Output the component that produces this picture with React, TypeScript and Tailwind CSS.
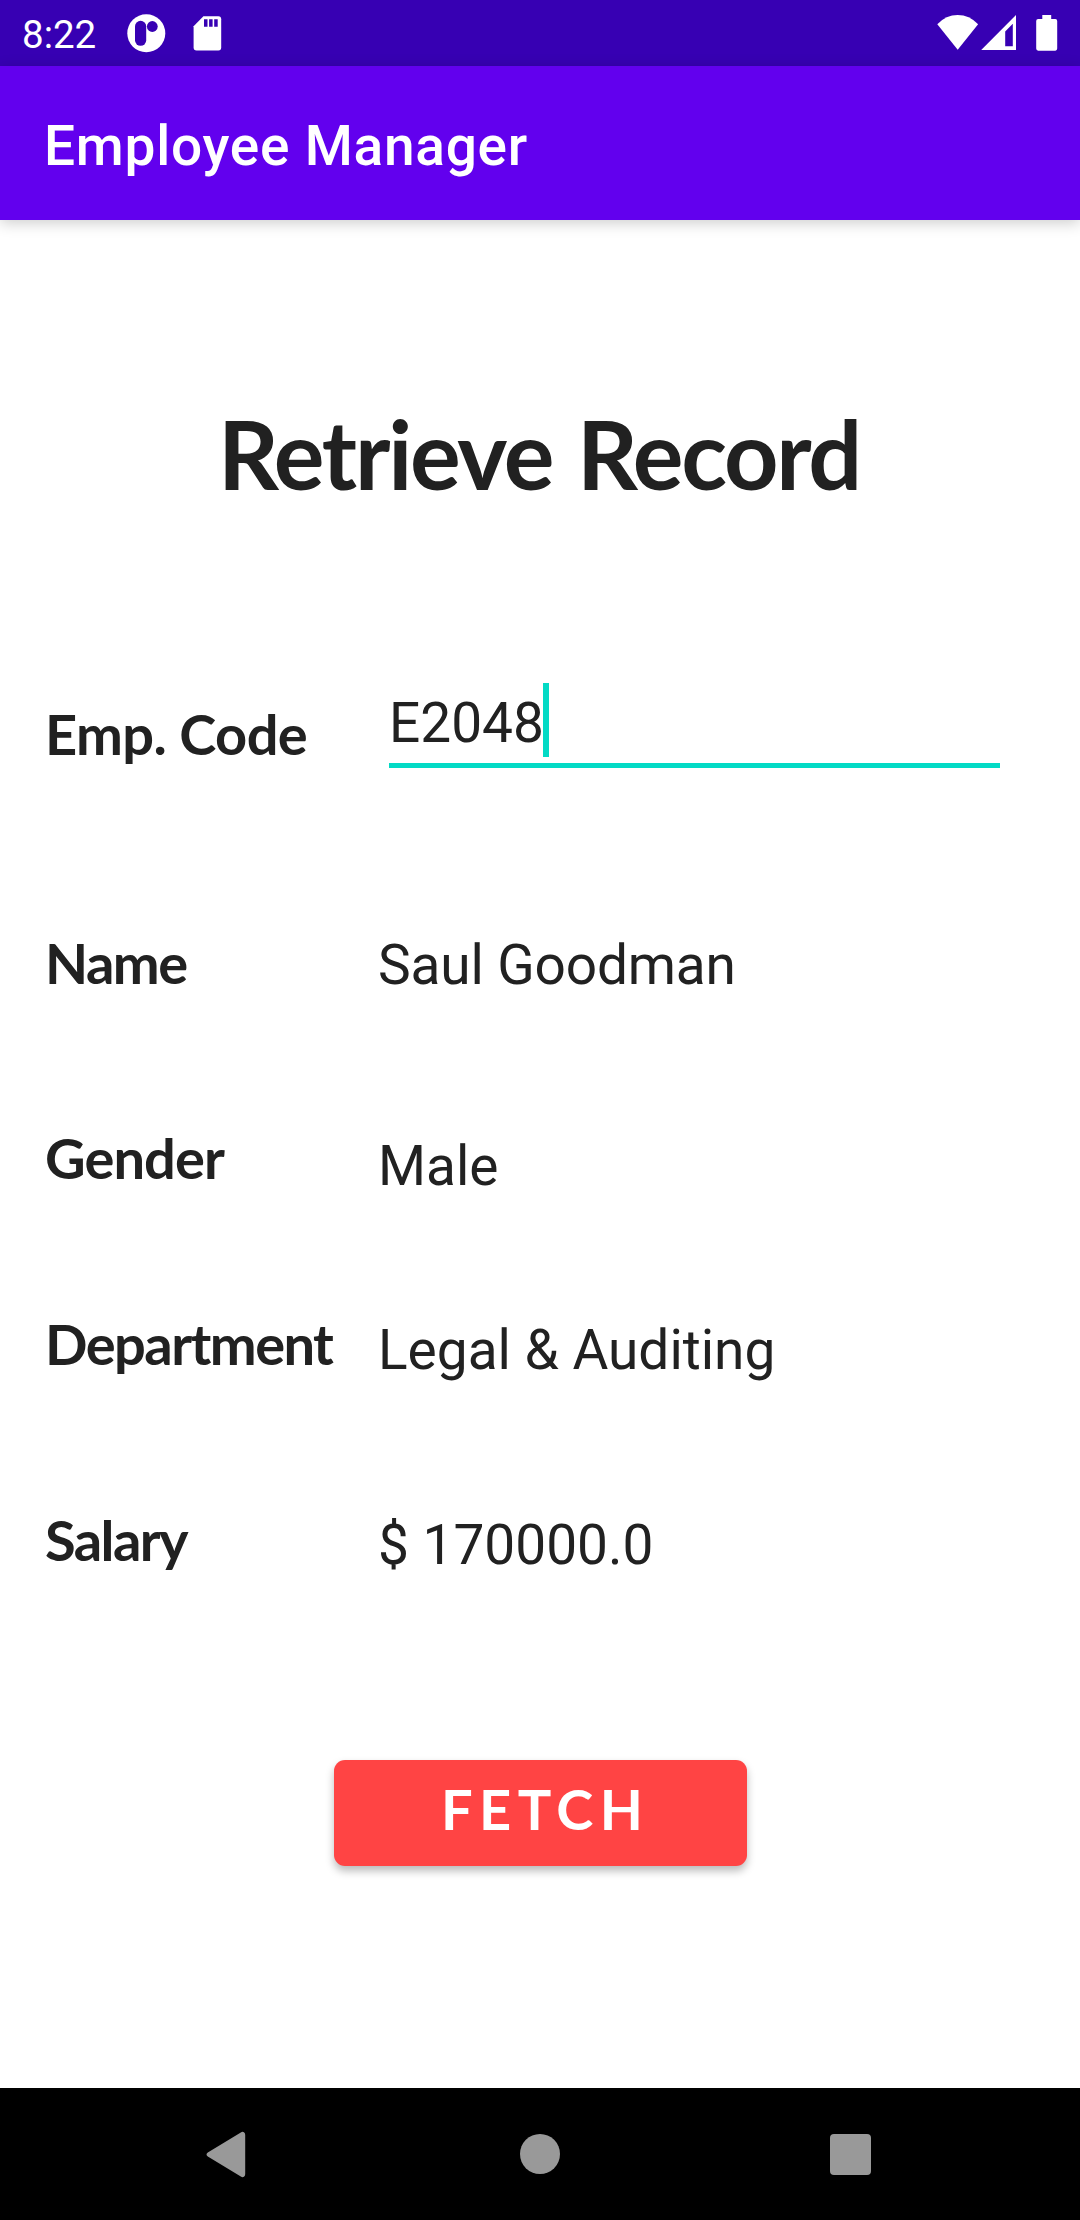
type RowProps = { label: string; value: string; row: string; labelClass: string; valueClass: string };

function StatusBar() {
  return (
    <div className="flex h-[66px] items-start bg-[#3700b3] text-white">
      <span className="ml-[22px] mt-[11px] w-[105px] text-[38.5px] leading-[47px]">8:22</span>
      <svg className="mt-[14px] h-[39px] w-[39px]" viewBox="0 0 39 39" fill="none">
        <circle cx="19.3" cy="19.2" r="19" fill="#fff" />
        <rect x="8" y="6.8" width="11.2" height="25" rx="5.6" fill="#3700b3" />
        <circle cx="25.3" cy="12.5" r="5.4" fill="#3700b3" />
      </svg>
      <svg className="ml-[27px] mt-[16px] h-[35px] w-[29px]" viewBox="0 0 29 35">
        <path
          d="M10.4 0.3H25.4Q28.2 0.3 28.2 3.3V31.5Q28.2 34.5 25.4 34.5H3.5Q0.6 34.5 0.6 31.5V10.3Z"
          fill="#fff"
        />
        <path d="M11 3.3h3.5v7.4H11zM16.1 3.3h3.5v7.4h-3.5zM21.2 3.3h3.5v7.4h-3.5z" fill="#3700b3" />
      </svg>
      <div className="ml-auto mr-[22px] mt-[14px] flex">
        <svg className="h-[37px] w-[42px]" viewBox="0 0 42 37" fill="#fff">
          <path d="M0.3 10.2Q9 1 20.7 1Q32.4 1 41.1 10.2L20.7 35.8Z" />
        </svg>
        <svg className="ml-[2px] h-[37px] w-[36px]" viewBox="0 0 36 37">
          <path fillRule="evenodd" fill="#fff" d="M35 1V36H0.2ZM31.8 9.8L24.2 17.4V32.3H31.8Z" />
        </svg>
        <svg className="ml-[19px] h-[38px] w-[22px]" viewBox="0 0 22 38" fill="#fff">
          <path d="M6.3 1H15.2V5H19.3Q21.2 5 21.2 7V34.6Q21.2 36.7 19.3 36.7H2.2Q0.2 36.7 0.2 34.6V7Q0.2 5 2.2 5H6.3Z" />
        </svg>
      </div>
    </div>
  );
}

function Row({ label, value, row, labelClass, valueClass }: RowProps) {
  return (
    <div className={`grid h-[78px] grid-cols-[333px_1fr] items-start pl-[45px] ${row}`}>
      <span className={`font-['Lato',sans-serif] text-[56px] font-bold leading-[68px] ${labelClass}`}>{label}</span>
      <span className={`text-[55px] leading-[64px] ${valueClass}`}>{value}</span>
    </div>
  );
}

export default function App() {
  return (
    <div className="flex h-[2220px] w-[1080px] flex-col overflow-hidden whitespace-nowrap bg-white font-['Roboto',sans-serif] text-[#212121]">
      <StatusBar />
      <header className="h-[154px] bg-[#6200ee] pl-[44px] pt-[48px] text-[55px] font-medium leading-[64px] tracking-[0.75px] text-white shadow-[0_3px_14px_rgba(0,0,0,0.2)]">
        Employee Manager
      </header>

      <main className="flex flex-1 flex-col">
        <h1 className="mt-[178px] pl-[218px] font-['Lato',sans-serif] text-[95px] font-bold leading-[110px] tracking-[-2.2px] [word-spacing:3.8px]">
          Retrieve Record
        </h1>

        <div className="mt-[175px] grid h-[85px] grid-cols-[344px_611px] items-start pl-[45px]">
          <span className="mt-[17px] font-['Lato',sans-serif] text-[56px] font-bold leading-[68px] tracking-[-0.6px]">
            Emp. Code
          </span>
          <div className="flex h-[85px] border-b-[5px] border-[#03dac5]">
            <span className="mt-[8px] w-[154px] text-[55px] leading-[64px]">E2048</span>
            <span className="h-[74px] w-[6px] bg-[#03dac5]" />
          </div>
        </div>

        <Row label="Name" value="Saul Goodman" row="mt-[161px]" labelClass="tracking-[-1.5px]" valueClass="mt-[4px] tracking-[-0.15px]" />
        <Row label="Gender" value="Male" row="mt-[117px]" labelClass="tracking-[-0.9px]" valueClass="mt-[10px]" />
        <Row label="Department" value="Legal & Auditing" row="mt-[108px]" labelClass="tracking-[-1.55px]" valueClass="mt-[8px]" />
        <Row label="Salary" value="$ 170000.0" row="mt-[118px]" labelClass="tracking-[-1.6px]" valueClass="mt-[7px]" />

        <button className="ml-[334px] mt-[176px] flex h-[106px] w-[413px] items-start rounded-[11px] bg-[#ff4444] pl-[107px] pt-[15px] font-['Lato',sans-serif] text-[56px] font-bold leading-[68px] tracking-[6.4px] text-white shadow-[0_5px_8px_rgba(0,0,0,0.27)]">
          FETCH
        </button>
      </main>

      <nav className="flex h-[132px] items-start bg-black text-[#999999]">
        <svg className="ml-[206px] mt-[43px] h-[47px] w-[40px]" viewBox="0 0 40 47" fill="currentColor">
          <path d="M34.8 1.6Q36.6 0.2 38.2 1.4Q39.2 2.2 39.2 4V43Q39.2 44.8 38.2 45.6Q36.6 46.8 34.8 45.4L1.8 25.6Q0.5 24.7 0.5 23.5Q0.5 22.3 1.8 21.4Z" />
        </svg>
        <span className="ml-[274px] mt-[46px] h-[40px] w-[40px] rounded-full bg-[#999999]" />
        <span className="ml-[270px] mt-[46px] h-[41px] w-[41px] rounded-[4px] bg-[#999999]" />
      </nav>
    </div>
  );
}
